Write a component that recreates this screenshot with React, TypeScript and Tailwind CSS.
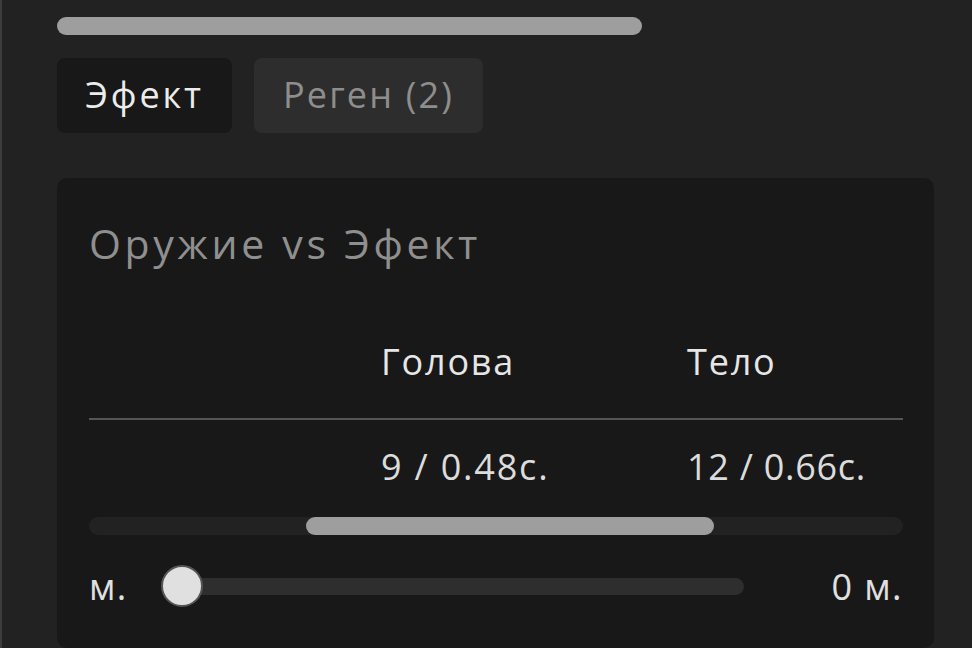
import React from "react";

// Row of the comparison table: label column is empty, then head and body values
function Row({ head, body, bold }: { head: string; body: string; bold?: boolean }) {
  return (
    <div className="flex items-center">
      <div className="w-[292px] shrink-0" />
      <div className={`w-[306px] shrink-0 ${bold ? "font-medium text-[#e6e6e6] tracking-[0.05em]" : "text-[#dcdcdc] tracking-[0.05em]"}`}>{head}</div>
      <div className={`shrink-0 ${bold ? "font-medium text-[#e6e6e6] tracking-[0.05em]" : "text-[#dcdcdc] tracking-[0.02em]"}`}>{body}</div>
    </div>
  );
}

export default function App() {
  return (
    <div
      className="w-[972px] h-[648px] overflow-hidden bg-[#222222] border-l-2 border-[#3c3c3c] flex"
      style={{ fontFamily: '"Open Sans", "Noto Sans", sans-serif' }}
    >
      <div className="flex flex-col pl-[55px] pt-[17px]">
        {/* top scrollbar */}
        <div className="w-[585px] h-[18px] rounded-full bg-[#9e9e9e]" />

        {/* tabs */}
        <div className="flex gap-[22px] mt-[23px]">
          <div className="w-[175px] h-[75px] rounded-[8px] bg-[#181818] flex items-center justify-center text-[36px] tracking-[0.08em] text-[#ececec]">
            Эфект
          </div>
          <div className="w-[229px] h-[75px] rounded-[8px] bg-[#2d2d2d] flex items-center justify-center text-[36px] tracking-[0.06em] text-[#8e8e8e]">
            Реген (2)
          </div>
        </div>

        {/* card */}
        <div className="mt-[45px] w-[877px] h-[480px] rounded-[10px] bg-[#181818] px-[32px] pt-[37px]">
          <div className="text-[41px] leading-[56px] tracking-[0.09em] text-[#8f8f8f]">Оружие vs Эфект</div>

          <div className="mt-[66px] text-[36px] leading-[50px]">
            <Row head="Голова" body="Тело" bold />
          </div>
          <div className="mt-[31px] h-[2px] w-[814px] bg-[#555555]" />
          <div className="mt-[22px] text-[36px] leading-[50px]">
            <Row head="9 / 0.48с." body="12 / 0.66с." />
          </div>

          {/* horizontal scrollbar */}
          <div className="mt-[25px] w-[814px] h-[18px] rounded-full bg-[#222222] flex">
            <div className="ml-[217px] w-[408px] h-[18px] rounded-full bg-[#9e9e9e]" />
          </div>

          {/* range slider */}
          <div className="mt-[30px] w-[814px] flex items-center text-[36px] tracking-[0.04em] text-[#e0e0e0] h-[44px]">
            <div className="w-[73px] shrink-0">м.</div>
            <div className="relative w-[582px] h-[17px] rounded-full bg-[#2e2e2e]">
              <div className="absolute left-[-1px] top-[-13px] w-[42px] h-[42px] rounded-full bg-[#e0e0e0] border-2 border-[#555555]" />
            </div>
            <div className="ml-auto">0 м.</div>
          </div>
        </div>
      </div>
    </div>
  );
}
